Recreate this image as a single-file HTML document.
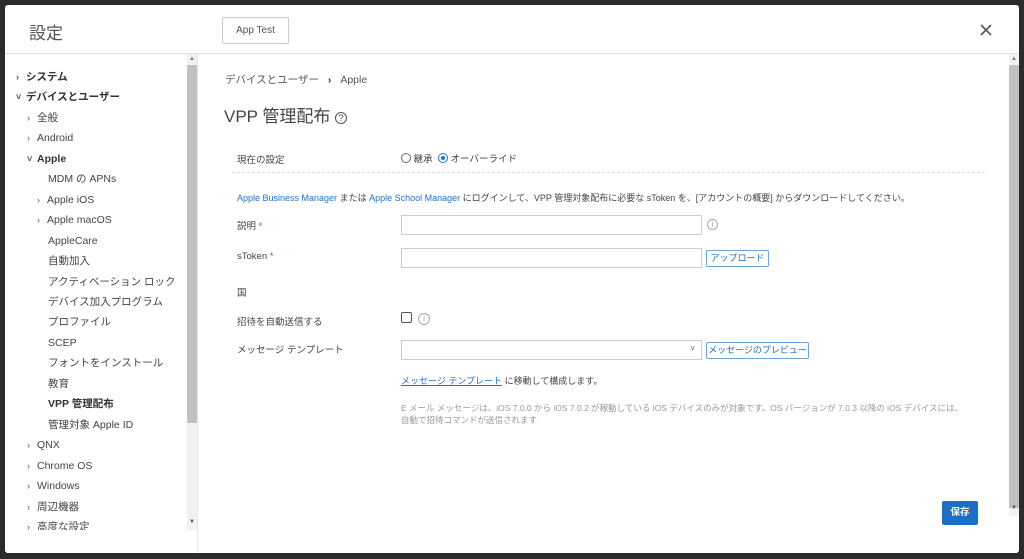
<!DOCTYPE html>
<html><head><meta charset="utf-8"><style>
*{margin:0;padding:0;box-sizing:border-box}
body{width:1024px;height:559px;background:#2b2b2b;position:relative;overflow:hidden;font-family:"Liberation Sans","Noto Sans CJK JP",sans-serif;color:#333}
.m{position:absolute;left:5px;top:5px;width:1014px;height:548px;background:#fff;border-radius:3px;overflow:hidden}
.a{position:absolute;white-space:nowrap}
.sb{font-size:11px;color:#444}
.blue{color:#1f74c9}
.inp{position:absolute;border:1px solid #c8cdd2;background:#fff}
.btn{position:absolute;border:1px solid #6fa3d9;border-radius:2px;color:#1f6fbf;font-size:9px;text-align:center;background:#fff}
.chev{display:inline-block;width:10px;font-size:9px;color:#555}
</style></head><body>
<div class="m">
  <div class="a" style="left:24px;top:14px;font-size:17px;color:#555">設定</div>
  <div class="a" style="left:217px;top:12px;width:67px;height:27px;border:1px solid #ccc;border-radius:2px;font-size:10px;color:#555;text-align:center;line-height:25px">App Test</div>
  <svg class="a" style="left:975px;top:19px" width="12" height="12"><path d="M1 1L11 11M11 1L1 11" stroke="#555" stroke-width="1.6"/></svg>
  <div class="a" style="left:0;top:48px;width:1014px;height:1px;background:#e2e2e2"></div>
  <div class="a" style="left:192px;top:49px;width:1px;height:499px;background:#e6e6e6"></div>
  <!-- sidebar -->
  <div class="a sb" style="left:11px;top:62px;line-height:20.45px;font-size:10.5px">
    <div style="font-weight:bold;color:#333"><span class="chev">›</span>システム</div>
    <div style="font-weight:bold;color:#333"><span class="chev">˅</span>デバイスとユーザー</div>
    <div style="padding-left:11px"><span class="chev">›</span>全般</div>
    <div style="padding-left:11px"><span class="chev">›</span>Android</div>
    <div style="padding-left:11px;font-weight:bold;color:#333"><span class="chev">˅</span>Apple</div>
    <div style="padding-left:32px">MDM の APNs</div>
    <div style="padding-left:21px"><span class="chev">›</span>Apple iOS</div>
    <div style="padding-left:21px"><span class="chev">›</span>Apple macOS</div>
    <div style="padding-left:32px">AppleCare</div>
    <div style="padding-left:32px">自動加入</div>
    <div style="padding-left:32px">アクティベーション ロック</div>
    <div style="padding-left:32px">デバイス加入プログラム</div>
    <div style="padding-left:32px">プロファイル</div>
    <div style="padding-left:32px">SCEP</div>
    <div style="padding-left:32px">フォントをインストール</div>
    <div style="padding-left:32px">教育</div>
    <div style="padding-left:32px;font-weight:bold;color:#333">VPP 管理配布</div>
    <div style="padding-left:32px">管理対象 Apple ID</div>
    <div style="padding-left:11px"><span class="chev">›</span>QNX</div>
    <div style="padding-left:11px"><span class="chev">›</span>Chrome OS</div>
    <div style="padding-left:11px"><span class="chev">›</span>Windows</div>
    <div style="padding-left:11px"><span class="chev">›</span>周辺機器</div>
    <div style="padding-left:11px"><span class="chev">›</span>高度な設定</div>
  </div>
  <div class="a" style="left:0;top:525px;width:192px;height:23px;background:#fff"></div>
  <div class="a" style="left:182px;top:49px;width:10px;height:476px;background:#f1f1f1"></div>
  <div class="a" style="left:182px;top:60px;width:10px;height:358px;background:#c1c1c1"></div>
  <div class="a" style="left:184px;top:51px;font-size:6px;color:#777">▲</div>
  <div class="a" style="left:184px;top:514px;font-size:6px;color:#555">▼</div>
  <div class="a" style="left:1004px;top:49px;width:10px;height:462px;background:#f1f1f1"></div>
  <div class="a" style="left:1004px;top:60px;width:10px;height:443px;background:#c1c1c1"></div>
  <div class="a" style="left:1006px;top:51px;font-size:6px;color:#777">▲</div>
  <div class="a" style="left:1006px;top:500px;font-size:6px;color:#555">▼</div>
  <!-- content -->
  <div class="a" style="left:220px;top:67px;font-size:10.5px;color:#555">デバイスとユーザー <b style="margin:0 6px;color:#333">›</b> Apple</div>
  <div class="a" style="left:219px;top:97px;font-size:17px;color:#444">VPP 管理配布 <span style="display:inline-block;width:12px;height:12px;border:1.3px solid #555;border-radius:50%;font-size:9px;line-height:10px;text-align:center;vertical-align:1px">?</span></div>
  <div class="a" style="left:232px;top:147px;font-size:9.5px;color:#444">現在の設定</div>
  <div class="a" style="left:396px;top:146px;font-size:9.5px;color:#444"><span style="display:inline-block;width:10px;height:10px;border:1px solid #666;border-radius:50%;vertical-align:-1px"></span> 継承 &nbsp;<span style="display:inline-block;width:10px;height:10px;border:1px solid #1f74c9;border-radius:50%;vertical-align:-1px;position:relative"><span style="position:absolute;left:2px;top:2px;width:4px;height:4px;background:#1f74c9;border-radius:50%"></span></span> オーバーライド</div>
  <div class="a" style="left:227px;top:167px;width:753px;border-top:1px dashed #ddd"></div>
  <div class="a" style="left:232px;top:186px;font-size:9px;color:#444"><span class="blue">Apple Business Manager</span> または <span class="blue">Apple School Manager</span> にログインして、VPP 管理対象配布に必要な sToken を、[アカウントの概要] からダウンロードしてください。</div>
  <div class="a" style="left:232px;top:213px;font-size:9.5px;color:#444">説明 <span style="color:#d33">*</span></div>
  <div class="inp" style="left:396px;top:210px;width:301px;height:20px"></div>
  <div class="a" style="left:702px;top:214px;width:11px;height:11px;border:1px solid #aaa;border-radius:50%;font-size:8px;color:#aaa;text-align:center;line-height:9px">i</div>
  <div class="a" style="left:232px;top:246px;font-size:9.5px;color:#444">sToken <span style="color:#d33">*</span></div>
  <div class="inp" style="left:396px;top:243px;width:301px;height:20px"></div>
  <div class="btn" style="left:701px;top:245px;width:63px;height:17px;line-height:15px">アップロード</div>
  <div class="a" style="left:232px;top:280px;font-size:9.5px;color:#444">国</div>
  <div class="a" style="left:232px;top:309px;font-size:9.5px;color:#444">招待を自動送信する</div>
  <div class="a" style="left:396px;top:307px;width:11px;height:11px;border:1px solid #555;border-radius:2px"></div>
  <div class="a" style="left:413px;top:308px;width:12px;height:12px;border:1px solid #aaa;border-radius:50%;font-size:8px;color:#aaa;text-align:center;line-height:10px">i</div>
  <div class="a" style="left:232px;top:337px;font-size:9.5px;color:#444">メッセージ テンプレート</div>
  <div class="inp" style="left:396px;top:335px;width:301px;height:20px"><span style="position:absolute;right:6px;top:3px;font-size:8px;color:#555">˅</span></div>
  <div class="btn" style="left:701px;top:337px;width:103px;height:17px;line-height:15px">メッセージのプレビュー</div>
  <div class="a" style="left:396px;top:369px;font-size:9px;color:#444"><span class="blue" style="text-decoration:underline">メッセージ テンプレート</span> に移動して構成します。</div>
  <div class="a" style="left:396px;top:397px;font-size:8.5px;color:#999;line-height:12px">E メール メッセージは、iOS 7.0.0 から iOS 7.0.2 が稼動している iOS デバイスのみが対象です。OS バージョンが 7.0.3 以降の iOS デバイスには、<br>自動で招待コマンドが送信されます</div>
  <div class="a" style="left:937px;top:496px;width:36px;height:24px;background:#1a6fc9;border-radius:2px;color:#fff;font-size:9.5px;font-weight:bold;text-align:center;line-height:24px">保存</div>
</div>
</body></html>
